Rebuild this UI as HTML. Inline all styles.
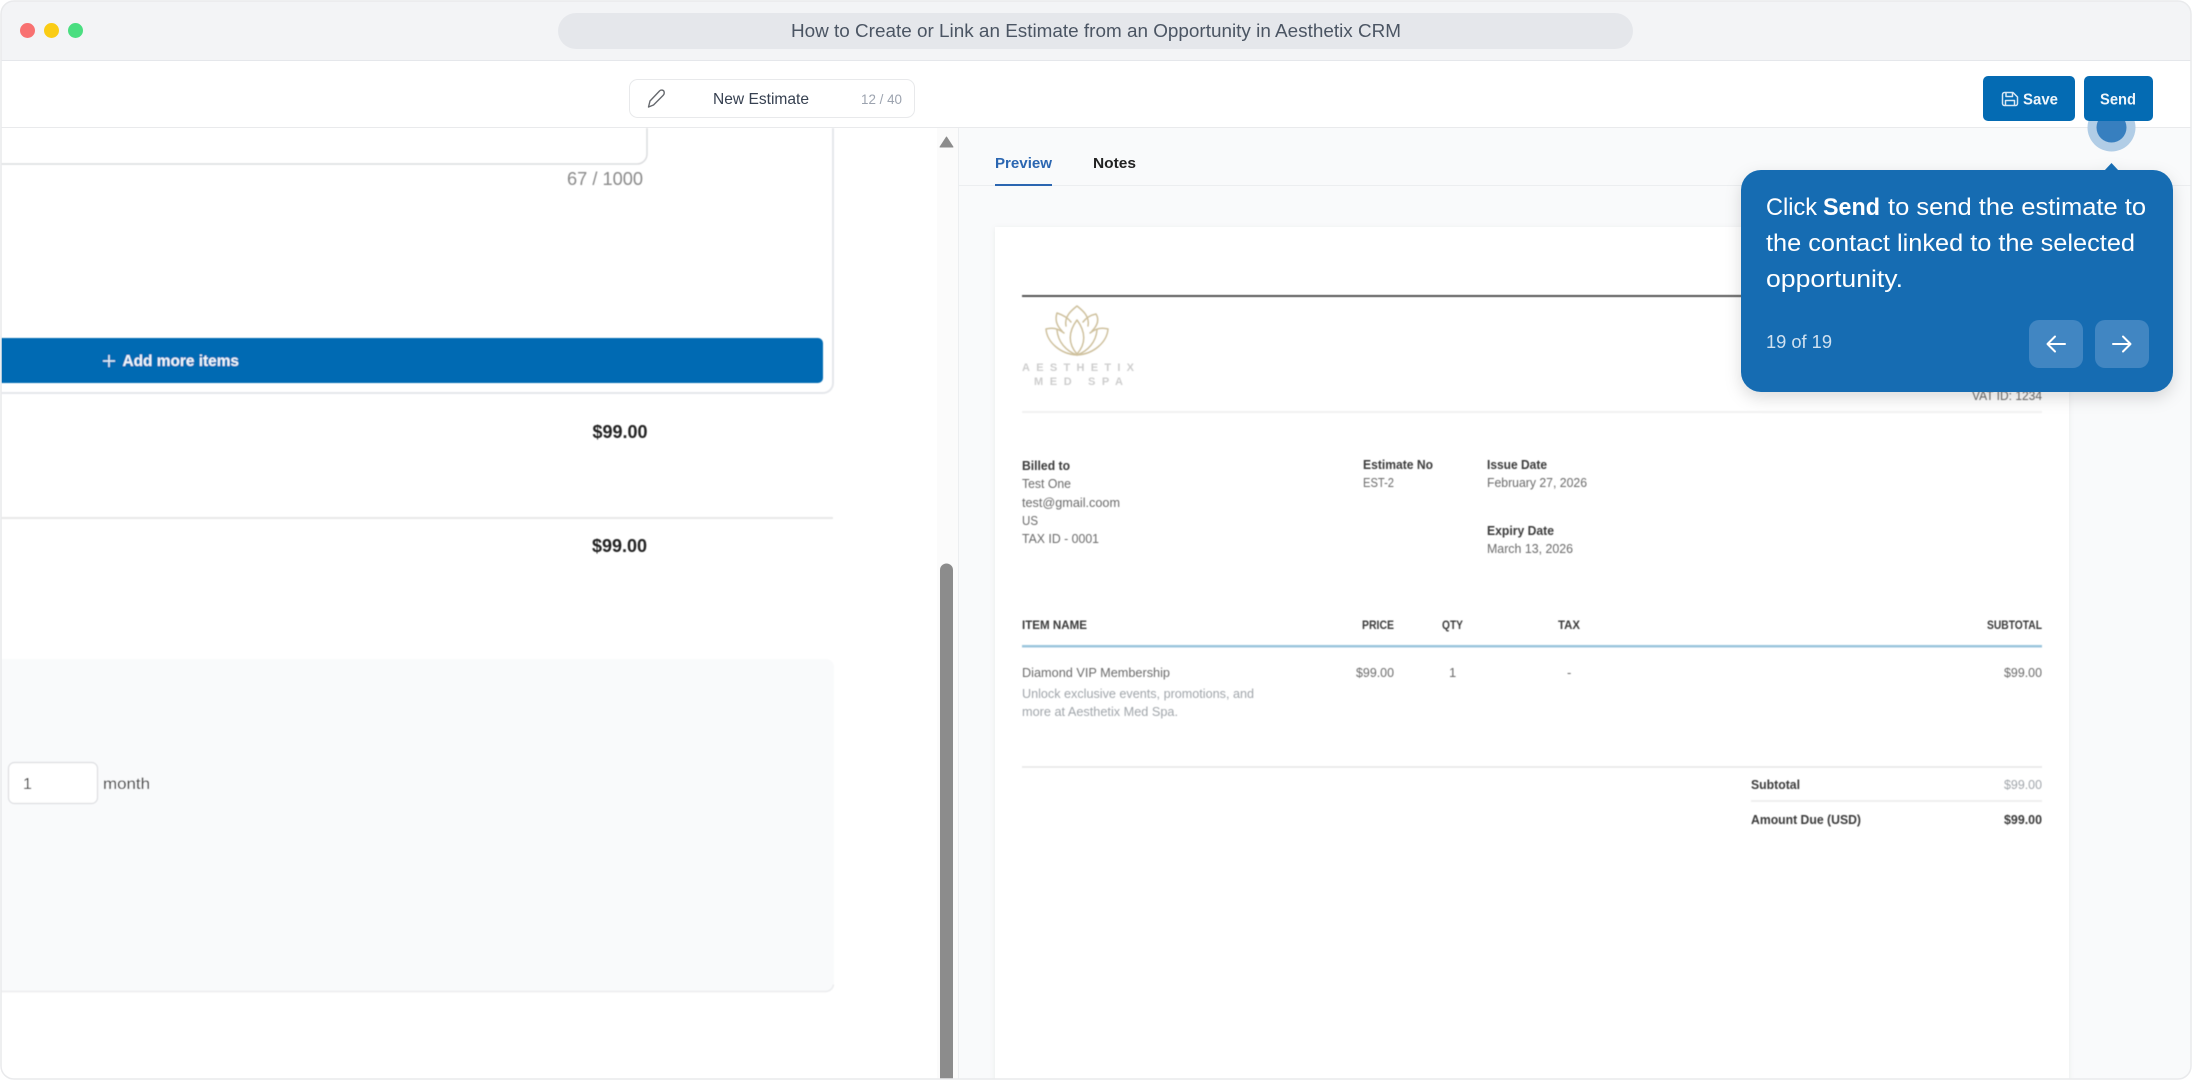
<!DOCTYPE html>
<html lang="en"><head><meta charset="utf-8"><title>How to Create or Link an Estimate from an Opportunity in Aesthetix CRM</title>
<style>
html,body{margin:0;padding:0;background:#fff;width:2192px;height:1080px;overflow:hidden}
svg{display:block;position:absolute;left:0;top:0}
text{font-family:"Liberation Sans",sans-serif;white-space:pre}
.b{font-weight:700}
.d{font-size:13px;fill:#6b6b6b}
.h{font-size:13px;fill:#3a3a3a;font-weight:700}
.s{font-size:12px;fill:#3a3a3a;font-weight:700}
.m{font-size:13px;fill:#a0a5aa}
.t{font-size:24px;fill:#fff}
</style></head><body>
<svg width="2192" height="1080" viewBox="0 0 2192 1080" xmlns="http://www.w3.org/2000/svg">
<defs>
<clipPath id="fr"><rect x="1" y="1" width="2190" height="1078" rx="13"/></clipPath>
<filter id="sh" x="-10%" y="-10%" width="120%" height="130%"><feDropShadow dx="0" dy="6" stdDeviation="8" flood-color="#000" flood-opacity=".14"/></filter>
<filter id="bl"><feGaussianBlur stdDeviation=".45"/></filter>
</defs>
<g clip-path="url(#fr)">
<rect width="2192" height="1080" fill="#fff"/>
<!-- title bar -->
<rect x="0" y="0" width="2192" height="60" fill="#f3f4f6"/>
<rect x="0" y="60" width="2192" height="1" fill="#e5e7eb"/>
<circle cx="27.5" cy="30.5" r="7.5" fill="#f87171"/>
<circle cx="51.5" cy="30.5" r="7.5" fill="#facc15"/>
<circle cx="75.5" cy="30.5" r="7.5" fill="#4ade80"/>
<rect x="558" y="13" width="1075" height="36" rx="18" fill="#e5e7eb"/>
<text x="791" y="37" font-size="18" fill="#4b5563" textLength="610" lengthAdjust="spacingAndGlyphs">How to Create or Link an Estimate from an Opportunity in Aesthetix CRM</text>
<!-- toolbar -->
<rect x="0" y="127" width="2192" height="1" fill="#e9eaec"/>
<rect x="629.5" y="79.5" width="285" height="38" rx="8" fill="#fff" stroke="#e8e9eb"/>
<path d="M648.500 107 L650 101 L659.500 91 C661 89.500 663.500 90 664 91.500 C664.500 93 664 94.500 663 95.500 L653.500 105 Z" fill="none" stroke="#66696e" stroke-width="1.400" stroke-linejoin="round"/>
<text x="713" y="104" font-size="16" fill="#374151" textLength="96" lengthAdjust="spacingAndGlyphs">New Estimate</text>
<text x="861" y="104" font-size="14" fill="#9ca3af" textLength="41" lengthAdjust="spacingAndGlyphs">12 / 40</text>
<!-- left pane -->
<g filter="url(#bl)">
<path d="M0 393 H823 a10 10 0 0 0 10 -10 V128" fill="none" stroke="#e5e7eb" stroke-width="2"/>
<path d="M0 164 H637 a10 10 0 0 0 10 -10 V128" fill="none" stroke="#dcdddf" stroke-width="1.500"/>
<text x="567" y="185" font-size="18" fill="#8a8a8a" textLength="76" lengthAdjust="spacingAndGlyphs">67 / 1000</text>
<path d="M0 338 H818 a5 5 0 0 1 5 5 V378 a5 5 0 0 1 -5 5 H0z" fill="#046bb3"/>
<path d="M103 361 H115 M109 355 V367" stroke="#e6f0f8" stroke-width="1.500"/>
<text x="122.500" y="366" font-size="16" class="b" fill="#f1f6fb" textLength="116.500" lengthAdjust="spacingAndGlyphs">Add more items</text>
<text x="592.500" y="438" font-size="18" class="b" fill="#222" textLength="55" lengthAdjust="spacingAndGlyphs">$99.00</text>
<rect x="0" y="517" width="833" height="2" fill="#e8e8e8"/>
<text x="592" y="552" font-size="18" class="b" fill="#222" textLength="55" lengthAdjust="spacingAndGlyphs">$99.00</text>
<rect x="-10" y="659" width="844" height="332" rx="8" fill="#f9fafb"/>
<path d="M0 991.500 H826 a8 8 0 0 0 7.500 -7" fill="none" stroke="#ebecee" stroke-width="1.500"/>
<rect x="8.500" y="762.500" width="89" height="41" rx="6" fill="#fff" stroke="#dcdde0" stroke-width="1.200"/>
<text x="23" y="789" font-size="16" fill="#333">1</text>
<text x="103" y="789" font-size="16" fill="#333" textLength="47" lengthAdjust="spacingAndGlyphs">month</text>
</g>
<!-- scrollbar -->
<rect x="937" y="128" width="21" height="952" fill="#fbfbfb"/>
<path d="M946.500 137 L953 147 H940z" fill="#8c8c8c" stroke="#8c8c8c" stroke-width="1" stroke-linejoin="round"/>
<path d="M940 1080 V570 a6.500 6.500 0 0 1 13 0 V1080z" fill="#8c8c8c"/>
<!-- right pane -->
<rect x="958" y="128" width="1234" height="952" fill="#f9fafb"/>
<rect x="958" y="128" width="1" height="952" fill="#eceef0"/>
<rect x="959" y="185" width="1233" height="1" fill="#eceef0"/>
<text x="995" y="168" font-size="15" class="b" fill="#2b66b1" textLength="57" lengthAdjust="spacingAndGlyphs">Preview</text>
<rect x="995" y="184" width="57" height="2" fill="#2b66b1"/>
<text x="1093" y="168" font-size="15" class="b" fill="#222" textLength="43" lengthAdjust="spacingAndGlyphs">Notes</text>
<!-- paper -->
<rect x="995" y="227" width="1074" height="870" fill="#fff" style="filter:drop-shadow(0 1px 3px rgba(0,0,0,.06))"/>
<g filter="url(#bl)">
<rect x="1022" y="295" width="1020" height="2" fill="#555"/>
<g fill="none" stroke="#cfc19e" stroke-width="1.500" stroke-linecap="round" stroke-linejoin="round">
<path d="M1066 326 C1064 316 1072 310 1077 306 C1082 310 1090 316 1088 326"/>
<path d="M1062 331 C1056 325 1055 319 1057 313 C1063 315 1068 318 1071 322"/>
<path d="M1092 331 C1098 325 1099 319 1096 314 C1091 315 1086 318 1083 322"/>
<path d="M1064 333 C1059 329 1053 327 1046 329 C1047 342 1060 354 1077 355 C1094 354 1107 342 1108 329 C1101 327 1095 329 1090 333"/>
<path d="M1057 330 C1058 342 1066 351 1077 355 M1097 330 C1096 342 1088 351 1077 355"/>
<path d="M1077 320 C1068 332 1068 344 1077 354 C1086 344 1086 332 1077 320"/>
</g>
<text x="1022" y="371" font-size="11" font-weight="700" fill="#cdcdcd" textLength="112">AESTHETIX</text>
<text x="1034" y="385" font-size="11" font-weight="700" fill="#cdcdcd" textLength="89">MED SPA</text>
<rect x="1022" y="411" width="1020" height="2" fill="#f2f2f2"/>
<text x="1972" y="400" class="d" textLength="70" lengthAdjust="spacingAndGlyphs">VAT ID: 1234</text>
<text x="1022" y="470" class="h" textLength="48" lengthAdjust="spacingAndGlyphs">Billed to</text>
<text x="1022" y="488" class="d" textLength="49" lengthAdjust="spacingAndGlyphs">Test One</text>
<text x="1022" y="507" class="d" textLength="98" lengthAdjust="spacingAndGlyphs">test@gmail.coom</text>
<text x="1022" y="525" class="d" textLength="16" lengthAdjust="spacingAndGlyphs">US</text>
<text x="1022" y="543" class="d" textLength="77" lengthAdjust="spacingAndGlyphs">TAX ID - 0001</text>
<text x="1363" y="469" class="h" textLength="70" lengthAdjust="spacingAndGlyphs">Estimate No</text>
<text x="1363" y="487" class="d" textLength="31" lengthAdjust="spacingAndGlyphs">EST-2</text>
<text x="1487" y="469" class="h" textLength="60" lengthAdjust="spacingAndGlyphs">Issue Date</text>
<text x="1487" y="487" class="d" textLength="100" lengthAdjust="spacingAndGlyphs">February 27, 2026</text>
<text x="1487" y="535" class="h" textLength="67" lengthAdjust="spacingAndGlyphs">Expiry Date</text>
<text x="1487" y="553" class="d" textLength="86" lengthAdjust="spacingAndGlyphs">March 13, 2026</text>
<text x="1022" y="629" class="s" textLength="65" lengthAdjust="spacingAndGlyphs">ITEM NAME</text>
<text x="1362" y="629" class="s" textLength="32" lengthAdjust="spacingAndGlyphs">PRICE</text>
<text x="1442" y="629" class="s" textLength="21" lengthAdjust="spacingAndGlyphs">QTY</text>
<text x="1558" y="629" class="s" textLength="22" lengthAdjust="spacingAndGlyphs">TAX</text>
<text x="1987" y="629" class="s" textLength="55" lengthAdjust="spacingAndGlyphs">SUBTOTAL</text>
<rect x="1022" y="645" width="1020" height="2.500" fill="#9bc6dd"/>
<text x="1022" y="677" class="d" textLength="148" lengthAdjust="spacingAndGlyphs">Diamond VIP Membership</text>
<text x="1356" y="677" class="d" textLength="38" lengthAdjust="spacingAndGlyphs">$99.00</text>
<text x="1449" y="677" class="d">1</text>
<text x="1567" y="677" class="d">-</text>
<text x="2004" y="677" class="d" textLength="38" lengthAdjust="spacingAndGlyphs">$99.00</text>
<text x="1022" y="698" class="m" textLength="232" lengthAdjust="spacingAndGlyphs">Unlock exclusive events, promotions, and</text>
<text x="1022" y="716" class="m" textLength="156" lengthAdjust="spacingAndGlyphs">more at Aesthetix Med Spa.</text>
<rect x="1022" y="766" width="1020" height="2" fill="#ebebeb"/>
<text x="1751" y="789" class="h" textLength="49" lengthAdjust="spacingAndGlyphs">Subtotal</text>
<text x="2004" y="789" class="m" textLength="38" lengthAdjust="spacingAndGlyphs">$99.00</text>
<rect x="1751" y="800" width="291" height="2" fill="#efefef"/>
<text x="1751" y="824" class="h" textLength="110" lengthAdjust="spacingAndGlyphs">Amount Due (USD)</text>
<text x="2004" y="824" class="h" textLength="38" lengthAdjust="spacingAndGlyphs">$99.00</text>
</g>
<!-- buttons -->
<circle cx="2111.500" cy="127.500" r="24" fill="#b1cde6"/>
<circle cx="2111.500" cy="127.500" r="15" fill="#377fbf"/>
<rect x="1983" y="76" width="92" height="45" rx="5" fill="#046bb3"/>
<rect x="2084" y="76" width="69" height="45" rx="5" fill="#046bb3"/>
<g fill="none" stroke="#d6e6f3" stroke-width="1.500" stroke-linejoin="round">
<path d="M2004.500 92.500 H2013 L2017.500 97 V103.500 a2 2 0 0 1 -2 2 H2004.500 a2 2 0 0 1 -2 -2 V94.500 a2 2 0 0 1 2 -2z"/>
<path d="M2006 92.500 V96.500 H2012.500 V92.500 M2005.500 105.500 V100.500 H2014.500 V105.500"/>
</g>
<text x="2023" y="104.500" font-size="16" class="b" fill="#eef5fb" textLength="35" lengthAdjust="spacingAndGlyphs">Save</text>
<text x="2100" y="104.500" font-size="16" class="b" fill="#eef5fb" textLength="36" lengthAdjust="spacingAndGlyphs">Send</text>
<!-- tooltip -->
<g filter="url(#sh)">
<path d="M2104 171 L2111.500 163 L2119 171z" fill="#136cb2"/>
<rect x="1741" y="170" width="432" height="222" rx="20" fill="#136cb2"/>
</g>
<text x="1766" y="215" class="t" textLength="51" lengthAdjust="spacingAndGlyphs">Click</text>
<text x="1823" y="215" class="t b" textLength="57" lengthAdjust="spacingAndGlyphs">Send</text>
<text x="1888" y="215" class="t" textLength="258" lengthAdjust="spacingAndGlyphs">to send the estimate to</text>
<text x="1766" y="251" class="t" textLength="369" lengthAdjust="spacingAndGlyphs">the contact linked to the selected</text>
<text x="1766" y="287" class="t" textLength="137" lengthAdjust="spacingAndGlyphs">opportunity.</text>
<text x="1766" y="348" font-size="18" fill="#d0e1f0" textLength="66" lengthAdjust="spacingAndGlyphs">19 of 19</text>
<rect x="2029" y="320" width="54" height="48" rx="10" fill="#4186c2"/>
<rect x="2095" y="320" width="54" height="48" rx="10" fill="#4186c2"/>
<path d="M2065 344 H2047.500 M2055 336.500 L2047.500 344 L2055 351.500" fill="none" stroke="#fff" stroke-width="2" stroke-linecap="round" stroke-linejoin="round"/>
<path d="M2113 344 H2130.500 M2123 336.500 L2130.500 344 L2123 351.500" fill="none" stroke="#fff" stroke-width="2" stroke-linecap="round" stroke-linejoin="round"/>
</g>
<rect x="1" y="1" width="2190" height="1078" rx="13" fill="none" stroke="#e9eaec" stroke-width="1.500"/>
</svg>
</body></html>
